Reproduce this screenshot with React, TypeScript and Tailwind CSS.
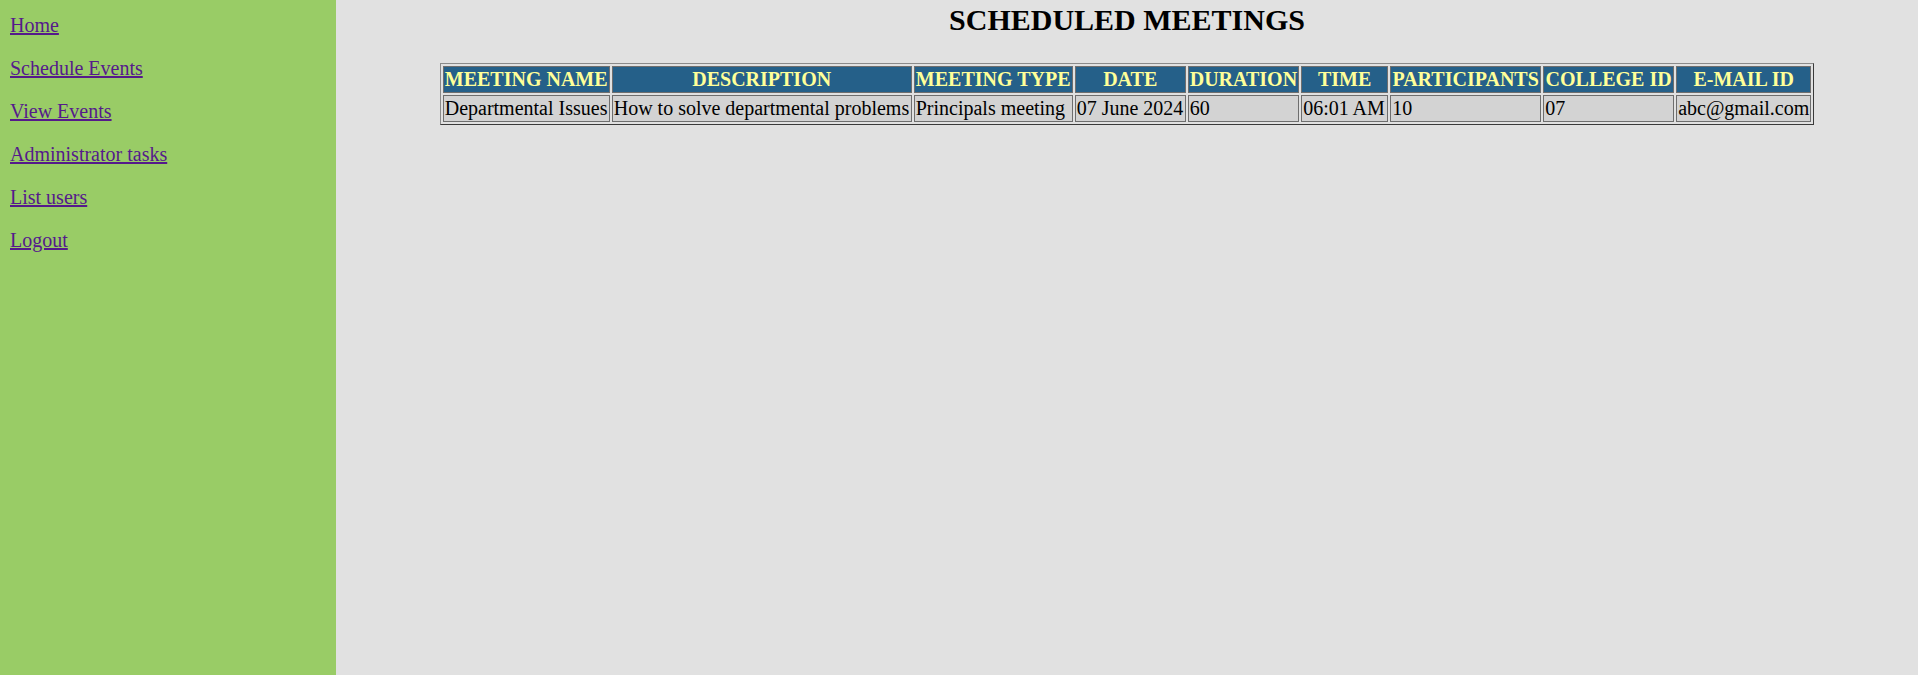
const links = ['Home', 'Schedule Events', 'View Events', 'Administrator tasks', 'List users', 'Logout'];

// column widths read off the reference (border-box, per cell)
const headers = [
  { label: 'MEETING NAME', w: 'w-[167px]' },
  { label: 'DESCRIPTION', w: 'w-[300px]' },
  { label: 'MEETING TYPE', w: 'w-[159px]' },
  { label: 'DATE', w: 'w-[111px]' },
  { label: 'DURATION', w: 'w-[111px]' },
  { label: 'TIME', w: 'w-[87px]' },
  { label: 'PARTICIPANTS', w: 'w-[151px]' },
  { label: 'COLLEGE ID', w: 'w-[131px]' },
  { label: 'E-MAIL ID', w: 'w-[135px]' },
];

const rows = [
  [
    'Departmental Issues',
    'How to solve departmental problems',
    'Principals meeting',
    '07 June 2024',
    '60',
    '06:01 AM',
    '10',
    '07',
    'abc@gmail.com',
  ],
];

const App = () => {
  return (
    <div className="flex h-[675px] w-full font-['Liberation_Serif','Times_New_Roman',serif] text-[20px] text-black">
      {/* Sidebar */}
      <nav className="w-[336px] shrink-0 bg-[#99cc66] px-[10px] pt-[14px]">
        <div className="flex flex-col gap-[20px]">
          {links.map((l) => (
            <a key={l} href="#" className="block w-fit leading-[23px] text-[#551a8b] underline">
              {l}
            </a>
          ))}
        </div>
      </nav>

      {/* Main */}
      <main className="flex-1 bg-[#e1e1e1] pt-[3px]">
        <h2 className="text-center text-[30px] font-bold leading-[34.5px]">SCHEDULED MEETINGS</h2>
        <div className="mt-[25.5px] flex justify-center">
          <table className="border-separate border-spacing-[2px] border border-t-[#8a8a8a] border-l-[#8a8a8a] border-r-[#3a3a3a] border-b-[#3a3a3a]">
            <thead>
              <tr>
                {headers.map((h) => (
                  <th
                    key={h.label}
                    className={`${h.w} whitespace-nowrap border border-[#6e6e6e] bg-[#256089] p-[1px] text-center font-bold leading-[23px] text-[#ffff99]`}
                  >
                    {h.label}
                  </th>
                ))}
              </tr>
            </thead>
            <tbody>
              {rows.map((r, i) => (
                <tr key={i}>
                  {r.map((c, j) => (
                    <td
                      key={j}
                      className="whitespace-nowrap border border-[#6e6e6e] bg-[#d3d3d3] p-[1px] text-left leading-[23px]"
                    >
                      {c}
                    </td>
                  ))}
                </tr>
              ))}
            </tbody>
          </table>
        </div>
      </main>
    </div>
  );
};

export default App;
